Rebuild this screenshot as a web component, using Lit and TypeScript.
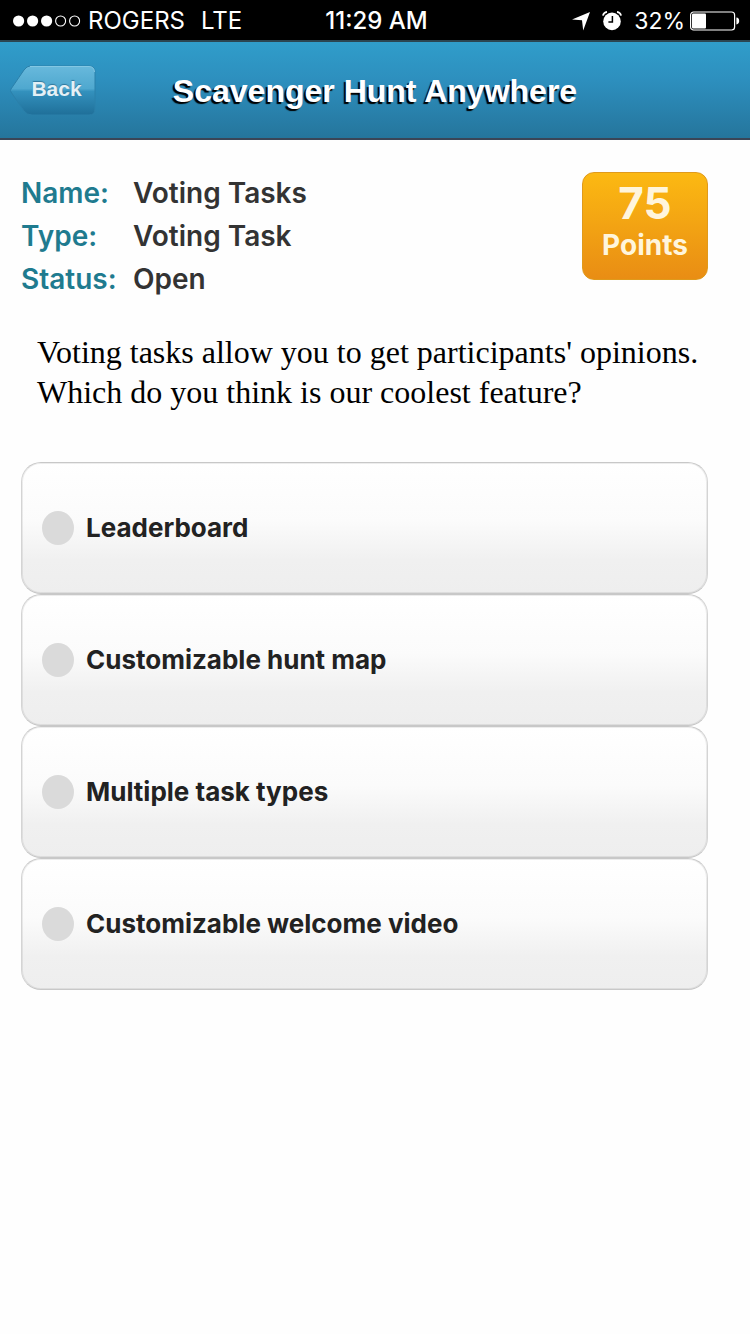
import { LitElement, html, css } from "lit";
import { customElement, property, state } from "lit/decorators.js";

@customElement("status-bar")
class StatusBar extends LitElement {
  static styles = css`
    :host {
      display: grid;
      grid-template-columns: 1fr auto 1fr;
      align-items: center;
      height: 40px;
      padding: 0 10px 0 13px;
      background: #000;
      color: #fff;
      font: 400 24px/42px Inter, "Liberation Sans", sans-serif;
      white-space: nowrap;
    }
    .left,
    .right {
      display: flex;
      align-items: center;
    }
    .right {
      justify-content: flex-end;
      font-size: 23px;
    }
    .carrier {
      margin: 0 16px 0 7px;
    }
    .time {
      font-weight: 500;
    }
    .alarm {
      margin: 0 12px;
    }
    .battery {
      margin-left: 5px;
    }
    svg {
      display: block;
    }
  `;

  render() {
    return html`
      <div class="left">
        <svg width="68" height="12" viewBox="0 0 68 12" role="img" aria-label="Signal: 3 of 5">
          <g fill="#fff">
            <circle cx="5.6" cy="6" r="5.6" />
            <circle cx="19.6" cy="6" r="5.6" />
            <circle cx="33.6" cy="6" r="5.6" />
          </g>
          <g fill="none" stroke="#fff" stroke-width="1.1">
            <circle cx="47.6" cy="6" r="5" />
            <circle cx="61.6" cy="6" r="5" />
          </g>
        </svg>
        <span class="carrier">ROGERS</span>
        <span>LTE</span>
      </div>
      <div class="time">11:29 AM</div>
      <div class="right">
        <svg width="18" height="19" viewBox="0 0 18 19" role="img" aria-label="Location in use">
          <path fill="#fff" d="M18 0 L11.2 18.4 L10 8.3 L0 7.4 Z" />
        </svg>
        <svg class="alarm" width="20" height="20" viewBox="0 0 20 20" role="img" aria-label="Alarm set">
          <circle cx="10" cy="10.4" r="8.8" fill="#fff" />
          <path d="M10.4 5 V11 H6.4" fill="none" stroke="#000" stroke-width="1.5" />
          <path d="M.9 4.600 Q1.6 1.4 5 .9 M19.1 4.600 Q18.4 1.4 15 .9" fill="none" stroke="#fff" stroke-width="1.7" />
        </svg>
        <span>32%</span>
        <svg class="battery" width="50" height="20" viewBox="0 0 50 20" role="img" aria-label="Battery">
          <rect x=".6" y="1" width="44" height="18" rx="3" fill="none" stroke="#fff" stroke-width="1.2" />
          <rect x="2" y="2.6" width="14" height="14.8" rx="1" fill="#fff" />
          <path d="M46.4 6.6 Q49.2 7 49.2 10 Q49.2 13 46.4 13.4 Z" fill="#fff" />
        </svg>
      </div>
    `;
  }
}

@customElement("nav-header")
class NavHeader extends LitElement {
  @property() heading = "";

  static styles = css`
    :host {
      box-sizing: border-box;
      display: grid;
      grid-template-columns: 1fr auto 1fr;
      align-items: center;
      height: 100px;
      padding: 2px 10px 0;
      border-top: 2px solid #2b4551;
      border-bottom: 2px solid #3a4557;
      background: linear-gradient(#309dca, #2d8fbe 40%, #25759c);
      font-family: "Liberation Sans", Arial, sans-serif;
    }
    .back {
      display: grid;
      justify-self: start;
      width: 87px;
      height: 52px;
      padding: 0;
      border: 0;
      background: none;
      cursor: pointer;
    }
    .shape,
    .label {
      grid-area: 1 / 1;
    }
    .label {
      align-self: center;
      padding: 0 0 4px 6px;
      color: #e4f0f6;
      font: bold 21px/24px "Liberation Sans", Arial, sans-serif;
      text-shadow: 0 -1px 1px #30779c;
    }
    .title {
      margin: 0;
      color: #fff;
      font-size: 32px;
      line-height: 40px;
      text-shadow: -2px 2px 1px #000;
    }
  `;

  render() {
    return html`
      <button class="back" type="button">
        <svg class="shape" width="87" height="52" viewBox="0 0 87 52" aria-hidden="true">
          <defs>
            <linearGradient id="face" x1="0" y1="0" x2="0" y2="1">
              <stop offset="0" stop-color="#68b9dc" />
              <stop offset=".46" stop-color="#4fa8cf" />
              <stop offset=".52" stop-color="#3391bd" />
              <stop offset="1" stop-color="#1f6f99" />
            </linearGradient>
          </defs>
          <path
            d="M20 1 H79 Q85 1 85 7 V44 Q85 50 79 50 H22 Q17 50 14 46 L1 27 Q0 25.500 1 24 L14 5 Q17 1 20 1 Z"
            fill="url(#face)"
            stroke="#2b80aa"
            stroke-width="1"
          />
          <path d="M20 1.500 H79 Q84 1.500 84.500 7" fill="none" stroke="#83c7e3" stroke-width="1" />
        </svg>
        <span class="label">Back</span>
      </button>
      <h1 class="title">${this.heading}</h1>
    `;
  }
}

@customElement("app-root")
class AppRoot extends LitElement {
  @state() private choice = "";

  private details = [
    ["Name:", "Voting Tasks"],
    ["Type:", "Voting Task"],
    ["Status:", "Open"],
  ];

  private options = [
    "Leaderboard",
    "Customizable hunt map",
    "Multiple task types",
    "Customizable welcome video",
  ];

  static styles = css`
    :host {
      display: block;
      min-height: 100vh;
      background: #fefefe;
      font-family: Inter, "Liberation Sans", sans-serif;
    }
    .content {
      padding: 32px 42px 32px 21px;
    }
    .summary {
      display: flex;
      justify-content: space-between;
      align-items: flex-start;
    }
    .details {
      margin: 0;
      font-size: 28px;
      font-weight: 600;
      line-height: 43px;
    }
    .detail {
      display: grid;
      grid-template-columns: 112px auto;
    }
    .term {
      color: #1f7b8f;
    }
    .value {
      margin: 0;
      color: #333;
    }
    .points {
      box-sizing: border-box;
      width: 126px;
      height: 108px;
      padding-top: 6px;
      border: 1px solid #e09a1c;
      border-radius: 12px;
      background: linear-gradient(#fcb912, #e98d14);
      color: #fff5dc;
      font-size: 28px;
      font-weight: 700;
      line-height: 36px;
      text-align: center;
    }
    .score {
      display: block;
      font-size: 44px;
      line-height: 48px;
    }
    .question {
      margin: 0;
      padding: 31px 0 50px 16px;
      color: #000;
      font: 32px/40px "Liberation Serif", "Times New Roman", serif;
    }
    .options {
      margin: 0;
      padding: 0;
      border: 0;
    }
    .option {
      display: flex;
      align-items: center;
      gap: 12px;
      box-sizing: border-box;
      height: 132px;
      padding-left: 20px;
      border: 1px solid #c8c8c8;
      border-left-color: #d4d4d4;
      border-right-color: #d4d4d4;
      border-radius: 20px;
      background: linear-gradient(#fff, #fbfbfb 45%, #f0f0f0 75%, #eee);
      box-shadow: inset 0 0 0 1px rgba(0, 0, 0, 0.07);
      color: #222;
      font-size: 26px;
      font-weight: 700;
      line-height: 32px;
      cursor: pointer;
    }
    .radio {
      appearance: none;
      flex: none;
      width: 32px;
      height: 34px;
      margin: 0;
      border-radius: 50%;
      background: #dadada;
      cursor: pointer;
    }
    .radio:checked {
      background: #1f7b8f;
    }
  `;

  render() {
    return html`
      <status-bar></status-bar>
      <nav-header heading="Scavenger Hunt Anywhere"></nav-header>
      <main class="content">
        <section class="summary">
          <dl class="details">
            ${this.details.map(
              ([term, value]) => html`
                <div class="detail">
                  <dt class="term">${term}</dt>
                  <dd class="value">${value}</dd>
                </div>
              `
            )}
          </dl>
          <div class="points"><span class="score">75</span>Points</div>
        </section>
        <p class="question" id="question">
          Voting tasks allow you to get participants' opinions. Which do you think is our coolest feature?
        </p>
        <fieldset class="options" aria-labelledby="question">
          ${this.options.map(
            (option) => html`
              <label class="option">
                <input
                  class="radio"
                  type="radio"
                  name="vote"
                  .checked=${this.choice === option}
                  @change=${() => (this.choice = option)}
                />
                <span>${option}</span>
              </label>
            `
          )}
        </fieldset>
      </main>
    `;
  }
}
